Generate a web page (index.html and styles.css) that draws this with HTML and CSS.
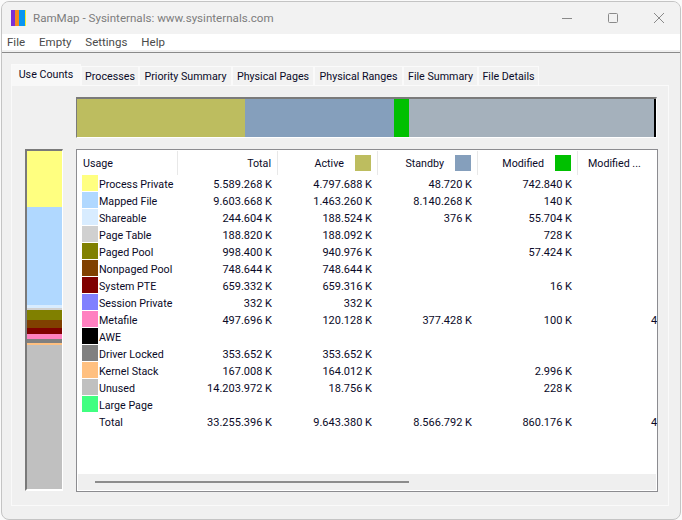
FILE: index.html
```html
<!DOCTYPE html>
<html lang="en">
<head>
<meta charset="utf-8">
<title>RamMap</title>
<link rel="stylesheet" href="styles.css">
</head>
<body>
<div class="window">
  <header class="titlebar">
    <svg class="app-icon" width="15" height="16" viewBox="0 0 15 16"><rect width="4" height="16" fill="#7b2fd6"/><rect x="4" width="4" height="16" fill="#f58a1f"/><rect x="8" width="6" height="16" fill="#0a96f0"/><rect x="14" width="1" height="16" fill="#f5ee30"/></svg>
    <span class="title">RamMap - Sysinternals: www.sysinternals.com</span>
    <div class="controls">
      <svg width="12" height="12" viewBox="0 0 12 12"><path d="M1 6.5h10" stroke="#8a8a8a" fill="none"/></svg>
      <svg width="12" height="12" viewBox="0 0 12 12"><rect x="1.5" y="1.5" width="9" height="9" rx="1" stroke="#8a8a8a" fill="none"/></svg>
      <svg width="12" height="12" viewBox="0 0 12 12"><path d="M1 1l10 10M11 1L1 11" stroke="#8a8a8a" fill="none"/></svg>
    </div>
  </header>
  <nav class="menubar"><span>File</span><span>Empty</span><span>Settings</span><span>Help</span></nav>
  <main class="client">
    <div class="tabs">
      <span class="tab active t1">Use Counts</span>
      <span class="tab t2">Processes</span>
      <span class="tab t3">Priority Summary</span>
      <span class="tab t4">Physical Pages</span>
      <span class="tab t5">Physical Ranges</span>
      <span class="tab t6">File Summary</span>
      <span class="tab t7">File Details</span>
    </div>
    <section class="panel">
      <div class="hbar">
        <i class="h-active"></i><i class="h-standby"></i><i class="h-modified"></i><i class="h-rest"></i><i class="h-end"></i>
      </div>
      <div class="lower">
        <div class="vbar">
          <i class="v1"></i><i class="v2"></i><i class="v3"></i><i class="v4"></i><i class="v5"></i><i class="v6"></i><i class="v7"></i><i class="v9"></i><i class="v11"></i><i class="v12"></i><i class="v13"></i>
        </div>
        <div class="list">
          <div class="table">
            <div class="row head">
              <div class="c usage">Usage</div>
              <div class="c num sep">Total</div>
              <div class="c num sep">Active<b class="hs s-active"></b></div>
              <div class="c num sep">Standby<b class="hs s-standby"></b></div>
              <div class="c num sep">Modified<b class="hs s-modified"></b></div>
              <div class="c last">Modified ...</div>
            </div>
            <div class="row"><div class="c usage"><b class="sw s1"></b>Process Private</div><div class="c num">5.589.268 K</div><div class="c num">4.797.688 K</div><div class="c num">48.720 K</div><div class="c num">742.840 K</div><div class="c last"></div></div>
            <div class="row"><div class="c usage"><b class="sw s2"></b>Mapped File</div><div class="c num">9.603.668 K</div><div class="c num">1.463.260 K</div><div class="c num">8.140.268 K</div><div class="c num">140 K</div><div class="c last"></div></div>
            <div class="row"><div class="c usage"><b class="sw s3"></b>Shareable</div><div class="c num">244.604 K</div><div class="c num">188.524 K</div><div class="c num">376 K</div><div class="c num">55.704 K</div><div class="c last"></div></div>
            <div class="row"><div class="c usage"><b class="sw s4"></b>Page Table</div><div class="c num">188.820 K</div><div class="c num">188.092 K</div><div class="c num"></div><div class="c num">728 K</div><div class="c last"></div></div>
            <div class="row"><div class="c usage"><b class="sw s5"></b>Paged Pool</div><div class="c num">998.400 K</div><div class="c num">940.976 K</div><div class="c num"></div><div class="c num">57.424 K</div><div class="c last"></div></div>
            <div class="row"><div class="c usage"><b class="sw s6"></b>Nonpaged Pool</div><div class="c num">748.644 K</div><div class="c num">748.644 K</div><div class="c num"></div><div class="c num"></div><div class="c last"></div></div>
            <div class="row"><div class="c usage"><b class="sw s7"></b>System PTE</div><div class="c num">659.332 K</div><div class="c num">659.316 K</div><div class="c num"></div><div class="c num">16 K</div><div class="c last"></div></div>
            <div class="row"><div class="c usage"><b class="sw s8"></b>Session Private</div><div class="c num">332 K</div><div class="c num">332 K</div><div class="c num"></div><div class="c num"></div><div class="c last"></div></div>
            <div class="row"><div class="c usage"><b class="sw s9"></b>Metafile</div><div class="c num">497.696 K</div><div class="c num">120.128 K</div><div class="c num">377.428 K</div><div class="c num">100 K</div><div class="c last clip">4</div></div>
            <div class="row"><div class="c usage"><b class="sw s10"></b>AWE</div><div class="c num"></div><div class="c num"></div><div class="c num"></div><div class="c num"></div><div class="c last"></div></div>
            <div class="row"><div class="c usage"><b class="sw s11"></b>Driver Locked</div><div class="c num">353.652 K</div><div class="c num">353.652 K</div><div class="c num"></div><div class="c num"></div><div class="c last"></div></div>
            <div class="row"><div class="c usage"><b class="sw s12"></b>Kernel Stack</div><div class="c num">167.008 K</div><div class="c num">164.012 K</div><div class="c num"></div><div class="c num">2.996 K</div><div class="c last"></div></div>
            <div class="row"><div class="c usage"><b class="sw s13"></b>Unused</div><div class="c num">14.203.972 K</div><div class="c num">18.756 K</div><div class="c num"></div><div class="c num">228 K</div><div class="c last"></div></div>
            <div class="row"><div class="c usage"><b class="sw s14"></b>Large Page</div><div class="c num"></div><div class="c num"></div><div class="c num"></div><div class="c num"></div><div class="c last"></div></div>
            <div class="row"><div class="c usage"><b class="sw"></b>Total</div><div class="c num">33.255.396 K</div><div class="c num">9.643.380 K</div><div class="c num">8.566.792 K</div><div class="c num">860.176 K</div><div class="c last clip">4</div></div>
          </div>
          <div class="hscroll"><div class="thumb"></div></div>
        </div>
      </div>
    </section>
  </main>
</div>
</body>
</html>
```
FILE: styles.css
```css
* { box-sizing: border-box; }
html, body { margin: 0; height: 100%; }
body {
  background: #fafafa;
  font-family: Roboto, "Open Sans", sans-serif;
  font-size: 11px;
  color: #0a0a28;
  overflow: hidden;
  padding: 1px 1px 0 1px;
}
.window {
  width: 680px;
  height: 519px;
  background: #f0f0f0;
  border: 1px solid #c4c4c4;
  border-radius: 8px;
  display: flex;
  flex-direction: column;
  overflow: hidden;
}
.titlebar {
  height: 32px;
  flex: none;
  display: flex;
  align-items: center;
  padding-left: 9px;
  background: #f2f2f2;
}
.app-icon { margin-right: 7px; }
.title { color: #7d7d7d; font-size: 11.6px; }
.controls {
  margin-left: auto;
  display: flex;
  gap: 34px;
  padding-right: 15px;
}
.menubar {
  height: 16px;
  flex: none;
  background: #fff;
  display: flex;
  gap: 14px;
  padding: 0 0 0 5px;
  align-items: center;
  color: #4a4a4a;
  font-size: 11.5px;
}
.client {
  flex: 1;
  border-top: 1px solid #8a8a8a;
  margin-top: 2px;
  padding: 11px 11px 13px 9px;
  display: flex;
  flex-direction: column;
}
.tabs {
  display: flex;
  height: 21px;
  align-items: flex-end;
  flex: none;
  position: relative;
  z-index: 1;
  font-size: 10.7px;
}
.tab {
  height: 19px;
  line-height: 20px;
  text-align: center;
  background: #f2f2f2;
  border: 1px solid #fafafa;
  border-bottom: 0;
  white-space: nowrap;
}
.tab.active {
  height: 22px;
  line-height: 20px;
  background: #f8f8f8;
  margin-bottom: -1px;
}
.t1 { width: 70px; }
.t2 { width: 58px; }
.t3 { width: 93px; }
.t4 { width: 82px; }
.t5 { width: 89px; }
.t6 { width: 75px; }
.t7 { width: 61px; }
.panel {
  flex: 1;
  background: #f0f0f0;
  border: 1px solid #fafafa;
  padding: 11px 0 0 13px;
  display: flex;
  flex-direction: column;
}
.hbar {
  margin-left: 51px;
  width: 581px;
  height: 41px;
  flex: none;
  display: flex;
  border-top: 2px solid #7a7a7a;
  border-left: 1px solid #7a7a7a;
  border-right: 1px solid #fff;
  border-bottom: 1px solid #fff;
}
.hbar i { display: block; height: 100%; }
.h-active { width: 168px; background: #bdbd5f; }
.h-standby { width: 149px; background: #859fbc; }
.h-modified { width: 15px; background: #00c000; }
.h-rest { width: 245px; background: #a5b1bc; }
.h-end { width: 2px; background: #000; }
.lower {
  flex: 1;
  display: flex;
  margin-top: 11px;
  gap: 13px;
}
.vbar {
  width: 38px;
  height: 342px;
  display: flex;
  flex-direction: column;
  border-top: 2px solid #7a7a7a;
  border-left: 2px solid #7a7a7a;
  border-right: 1px solid #fff;
  border-bottom: 2px solid #fff;
}
.vbar i { display: block; flex: none; }
.v1 { height: 56px; background: #ffff80; }
.v2 { height: 98px; background: #b0d8ff; }
.v3 { height: 3px; background: #d8ecff; }
.v4 { height: 2px; background: #d0d0d0; }
.v5 { height: 10px; background: #808000; }
.v6 { height: 8px; background: #804000; }
.v7 { height: 6px; background: #800000; }
.v9 { height: 5px; background: #ff80c0; }
.v11 { height: 4px; background: #808080; }
.v12 { height: 2px; background: #ffc080; }
.v13 { flex: 1 !important; background: #c0c0c0; }
.list {
  width: 582px;
  height: 343px;
  background: #fff;
  border: 1px solid #8c8c90;
  display: flex;
  flex-direction: column;
  overflow: hidden;
}
.table { flex: 1; overflow: hidden; }
.row {
  display: grid;
  grid-template-columns: 101px 100px 100px 100px 100px 100px;
  height: 17px;
  line-height: 19px;
  white-space: nowrap;
}
.row.head { height: 25px; line-height: 25px; font-size: 10.7px; }
.c { padding-right: 6px; overflow: hidden; }
.num { text-align: right; }
.usage { display: flex; align-items: flex-start; padding-left: 5px; font-size: 10.7px; }
.head .usage { padding-left: 6px; border-right: 1px solid #e8e8e8; height: 24px; margin-top: 1px; align-items: center; }
.sep { border-right: 1px solid #e8e8e8; display: flex; justify-content: flex-end; align-items: center; height: 24px; margin-top: 1px; }
.last { padding-left: 10px; }
.head .last { margin-top: 1px; line-height: 26px; }
.clip { padding-left: 73px; }
.sw { width: 16px; height: 16px; margin-right: 1px; flex: none; }
.hs { width: 16px; height: 16px; margin-left: 11px; flex: none; }
.s1 { background: #ffff80; }
.s2 { background: #b0d8ff; }
.s3 { background: #d8ecff; }
.s4 { background: #d0d0d0; }
.s5 { background: #808000; }
.s6 { background: #804000; }
.s7 { background: #800000; }
.s8 { background: #8080ff; }
.s9 { background: #ff80c0; }
.s10 { background: #000; }
.s11 { background: #808080; }
.s12 { background: #ffc080; }
.s13 { background: #c0c0c0; }
.s14 { background: #40ff80; }
.s-active { background: #bdbd5f; }
.s-standby { background: #859fbc; }
.s-modified { background: #00c000; }
.hscroll {
  flex: none;
  height: 16px;
  margin: 0 1px 1px 1px;
  background: #efefef;
  padding: 7px 0 0 17px;
}
.thumb { width: 314px; height: 2px; background: #8c8c8c; }
```
